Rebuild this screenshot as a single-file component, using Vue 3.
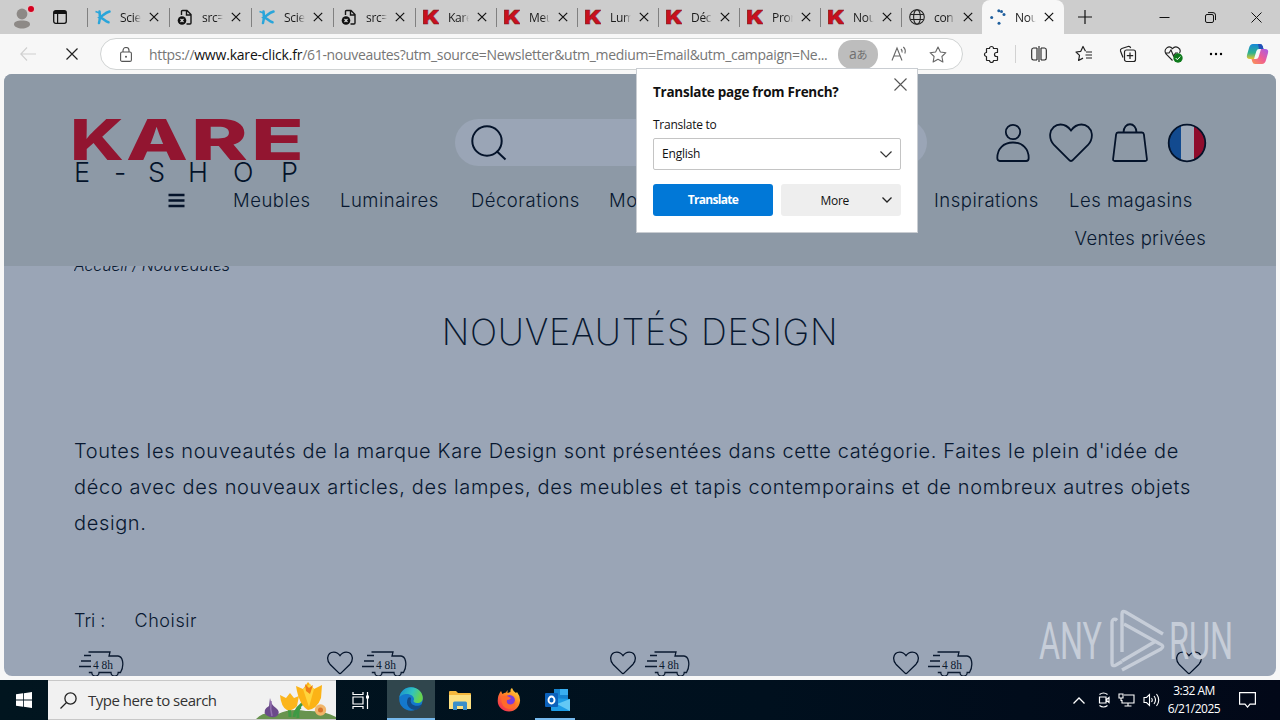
<template>
  <div class="screen">
    <!-- tab strip -->
    <div class="tab-strip">
      <div class="profile">
        <svg width="26" height="26" viewBox="0 0 26 26">
          <circle cx="12" cy="11" r="5.400" fill="#8d8986" />
          <path d="M4 21.500c0-3 3-4 8-4s8 1 8 4c0 2-4 4-8 4s-8-2-8-4z" fill="#8d8986" />
          <circle cx="21" cy="6" r="4" fill="#e3c4c6" />
          <circle cx="21" cy="6" r="3" fill="#d4001f" />
        </svg>
      </div>
      <svg class="workspace" width="14" height="14" viewBox="0 0 14 14">
        <rect x="0.700" y="0.700" width="12.600" height="12.600" rx="2" fill="none" stroke="#111" stroke-width="1.300" />
        <path d="M1 1h12v3H1zM4 3h1.200v10H4z" fill="#111" />
      </svg>
      <div class="tabs">
        <div v-for="(tab, index) in tabs" :key="index" class="tab" :class="{ active: tab.active, narrow: index > 3 }">
          <svg v-if="tab.icon === 'blue'" class="favicon" viewBox="0 0 16 16">
            <path d="M4.500 2.500c.5 4 .5 8-.5 11.500M14.500 2.500c-4 1-6 3.500-9.500 5.800 3 1 5 4 8.500 5" fill="none" stroke="#29a5da" stroke-width="2.500" stroke-linecap="round" />
            <path d="M.5 2.500l4 1.500" stroke="#29a5da" stroke-width="1.500" />
          </svg>
          <svg v-else-if="tab.icon === 'file'" class="favicon" viewBox="0 0 16 16">
            <path d="M4.500 6V2.500q0-1 1-1H10L14 5.500V14q0 1-1 1H9.500M9.500 1.500v4.500H14" fill="none" stroke="#151515" stroke-width="1.400" />
            <circle cx="5" cy="11.500" r="4.300" fill="#111" />
            <path d="M3.500 10l3 3M6.500 10l-3 3" stroke="#ddd" stroke-width="1.100" />
          </svg>
          <svg v-else-if="tab.icon === 'kare'" class="favicon" viewBox="0 0 16 16">
            <text class="kare-k" x="-1" y="15" textLength="18" lengthAdjust="spacingAndGlyphs">K</text>
          </svg>
          <svg v-else-if="tab.icon === 'globe'" class="favicon" viewBox="0 0 16 16">
            <g fill="none" stroke="#222" stroke-width="1.100">
              <circle cx="8" cy="8" r="7.300" />
              <ellipse cx="8" cy="8" rx="3.400" ry="7.300" />
              <path d="M1.500 5.500h13M1.500 10.500h13" />
            </g>
          </svg>
          <svg v-else class="favicon" viewBox="0 0 16 16">
            <g fill="#1f5f9e">
              <circle cx="1.700" cy="8.500" r="1.500" />
              <circle cx="9" cy="14.300" r="1.500" />
              <circle cx="8.800" cy="1.700" r="1.500" />
              <circle cx="11.500" cy="2.600" r="1.500" />
              <circle cx="14" cy="5.500" r="1.500" />
            </g>
          </svg>
          <span class="tab-title">{{ tab.title }}</span>
          <svg class="tab-close" width="10" height="10" viewBox="0 0 10 10"><path d="M.8.800l8.400 8.400M9.200.800L.8 9.200" stroke="#111" stroke-width="1.200" /></svg>
        </div>
      </div>
      <svg class="new-tab" width="14" height="14" viewBox="0 0 14 14"><path d="M7 0v14M0 7h14" stroke="#111" stroke-width="1.200" /></svg>
      <div class="window-buttons">
        <svg width="11" height="11" viewBox="0 0 11 11"><path d="M.5 5.500h10" stroke="#111" /></svg>
        <svg width="11" height="11" viewBox="0 0 11 11">
          <rect x=".5" y="2.500" width="8" height="8" rx="1.500" fill="none" stroke="#111" />
          <path d="M3 .6h5q2.500 0 2.500 2.500v5" fill="none" stroke="#111" />
        </svg>
        <svg width="11" height="11" viewBox="0 0 11 11"><path d="M.5.500l10 10M10.500.500l-10 10" stroke="#111" /></svg>
      </div>
    </div>

    <!-- toolbar -->
    <div class="toolbar">
      <svg class="back" width="16" height="14" viewBox="0 0 16 14"><path d="M7 .5L.8 7 7 13.500M1 7h15" fill="none" stroke="#cfcfcf" stroke-width="1.100" /></svg>
      <svg class="stop" width="12" height="12" viewBox="0 0 12 12"><path d="M.5.500l11 11M11.500.500l-11 11" stroke="#222" stroke-width="1.200" /></svg>
      <div class="address">
        <svg class="lock" width="12" height="15" viewBox="0 0 12 15">
          <path d="M3 5V3.500a3 3 0 0 1 6 0V5" fill="none" stroke="#555" stroke-width="1.100" />
          <rect x=".6" y="5" width="10.800" height="9.400" rx="1.500" fill="none" stroke="#555" stroke-width="1.100" />
          <circle cx="6" cy="9.700" r="1" fill="#555" />
        </svg>
        <div class="url">https://<b>www.kare-click.fr</b>/61-nouveautes?utm_source=Newsletter&amp;utm_medium=Email&amp;utm_campaign=Ne...</div>
        <div class="translate-badge">a<small>あ</small></div>
        <svg class="read-aloud" width="17" height="16" viewBox="0 0 17 16">
          <path d="M1 14.500L6 2l5 12.500M2.700 10h6.600M10 3q1.500 1.500 1 3.500M12.300 1q3 2.800 1.500 6.500" fill="none" stroke="#666" stroke-width="1.100" />
        </svg>
        <svg class="fav-star" width="18" height="17" viewBox="0 0 18 17"><path :d="starPath" fill="none" stroke="#666" stroke-width="1.100" stroke-linejoin="round" /></svg>
      </div>
      <div class="tool-icons">
        <svg width="18" height="18" viewBox="0 0 18 18"><path d="M4 3.500h2.500a2 2 0 1 1 4 0H14q.5 0 .5.500v3.500h-1a2 2 0 0 0 0 4h1V15q0 .5-.5.500h-3.500a2 2 0 0 1-4 0H4q-.5 0-.5-.5v-3.500a2 2 0 1 1 0-4V4q0-.5.500-.5z" fill="none" stroke="#222" stroke-width="1.200" stroke-linejoin="round" /></svg>
        <i class="divider"></i>
        <svg width="18" height="18" viewBox="0 0 18 18"><path d="M7 3H3.500Q1.700 3 1.700 5v8q0 2 1.800 2H7M11 3h3.500q1.800 0 1.800 2v8q0 2-1.800 2H11M9 1v16M7 3v12M11 3v12" fill="none" stroke="#222" stroke-width="1.100" /></svg>
        <svg width="18" height="18" viewBox="0 0 18 18"><path d="M10.500 6.300L8 1.500 5.800 6.300l-4.800.700 3.500 3.400-.9 5.100 4.400-2.400M11 7h6M10.500 10h6.500M11 13h6" fill="none" stroke="#222" stroke-width="1.200" stroke-linejoin="round" /></svg>
        <svg width="18" height="18" viewBox="0 0 18 18">
          <path d="M4 12.500L1.500 6q-.5-1.800 1.300-2.500L9 1.500q2-.5 2.700 1.500" fill="none" stroke="#222" stroke-width="1.200" />
          <rect x="5.500" y="5" width="11" height="11.500" rx="2" fill="none" stroke="#222" stroke-width="1.200" />
          <path d="M11 7.500v6.500M7.800 10.700h6.400" stroke="#222" stroke-width="1.200" />
        </svg>
        <svg width="19" height="18" viewBox="0 0 19 18">
          <path d="M8.500 15.500L2 9C-1 4 5-.5 8.500 3.700 12-.5 18 4 15.500 8M1 8h4l2-3 2.500 6L11.500 8H14" fill="none" stroke="#222" stroke-width="1.100" />
          <circle cx="14" cy="13" r="4.700" fill="#0e7a1c" />
          <path d="M11.700 13l1.600 1.700 3-3.200" fill="none" stroke="#fff" />
        </svg>
        <svg width="14" height="4" viewBox="0 0 14 4"><circle cx="2" cy="2" r="1.200" /><circle cx="7" cy="2" r="1.200" /><circle cx="12" cy="2" r="1.200" /></svg>
        <svg class="copilot" width="23" height="22" viewBox="0 0 23 22">
          <defs>
            <linearGradient id="cop-a" x1="0" y1="0" x2="0" y2="1"><stop offset="0" stop-color="#1687d9" /><stop offset=".6" stop-color="#2fb28c" /><stop offset="1" stop-color="#e7c52e" /></linearGradient>
            <linearGradient id="cop-b" x1="1" y1="0" x2="0" y2="1"><stop offset="0" stop-color="#a45bea" /><stop offset=".5" stop-color="#ee5c94" /><stop offset="1" stop-color="#fb9852" /></linearGradient>
          </defs>
          <path d="M7 1h7q2 0 2.700 2.300L17.500 6H13q-2 0-2.600 2L8 16H4q-4 0-3-4l2-7q1-4 4-4z" fill="url(#cop-a)" />
          <path d="M16 21H9q-2 0-2.700-2.300L5.500 16H10q2 0 2.600-2L15 6h4q4 0 3 4l-2 7q-1 4-4 4z" fill="url(#cop-b)" />
          <path d="M12 1h2q2 0 2.700 2.300L17.500 6H13z" fill="#2450b8" />
        </svg>
      </div>
    </div>

    <!-- page -->
    <div class="page">
      <header class="site-header">
        <div class="header-main">
          <svg class="logo" width="228" height="66" viewBox="0 0 228 66">
            <text v-for="l in logoLetters" :key="l.char" class="logo-big" :x="l.x" y="40.500" :textLength="l.w" lengthAdjust="spacingAndGlyphs">{{ l.char }}</text>
            <text class="logo-small" x="0 40 74 114 159 207" y="63">E-SHOP</text>
          </svg>
          <div class="search-pill">
            <svg width="36" height="36" viewBox="0 0 36 36"><g fill="none" stroke="#04132a" stroke-width="2"><circle cx="16" cy="16" r="14.700" /><path d="M25.500 26l9 8.500" /></g></svg>
          </div>
          <div class="account-icons">
            <svg width="34" height="40" viewBox="0 0 34 40"><g class="line"><circle cx="17" cy="9" r="7.200" /><path d="M1.300 35c0-9 6-15.500 15.700-15.500S32.700 26 32.700 35q0 3-2.500 3H3.800q-2.500 0-2.500-3z" /></g></svg>
            <svg width="44" height="40" viewBox="0 0 44 40"><path class="line" d="M22 38Q21 38 19.500 36.300L5 22C1.500 18 .9 14 1.200 11 2 5 6.500 1.500 11.500 1.500c5 0 8 2.500 10.500 6 2.500-3.500 5.500-6 10.500-6C37.500 1.500 42 5 42.800 11c.3 3-.3 7-3.800 11L24.500 36.300Q23 38 22 38z" /></svg>
            <svg width="36" height="40" viewBox="0 0 36 40"><path class="line" d="M6 9.500h24q1.600 0 1.900 1.800L34.900 36q.2 2-1.700 2H2.800Q.9 38 1.100 36L4.100 11.300Q4.400 9.500 6 9.500zM11.500 9.500C11.500-1.500 24.500-1.500 24.500 9.500" /></svg>
            <svg width="40" height="40" viewBox="0 0 40 40">
              <clipPath id="flag-clip"><circle cx="20" cy="20" r="18.500" /></clipPath>
              <g clip-path="url(#flag-clip)"><path d="M0 0h14v40H0z" fill="#124a8f" /><path d="M14 0h13v40H14z" fill="#9ea9b8" /><path d="M27 0h13v40H27z" fill="#8f0c2c" /></g>
              <circle cx="20" cy="20" r="18.300" fill="none" stroke="#04132a" stroke-width="1.800" />
            </svg>
          </div>
        </div>
        <nav class="site-nav">
          <svg width="17" height="15" viewBox="0 0 17 15"><path d="M.5 2h16M.5 7.500h16M.5 13h16" stroke="#04132a" stroke-width="2.600" /></svg>
          <a v-for="item in navItems" :key="item">{{ item }}</a>
        </nav>
        <div class="site-nav-second"><a>Ventes privées</a></div>
      </header>

      <main class="content">
        <div class="breadcrumb"><span>Accueil / Nouveautés</span></div>
        <h1>NOUVEAUTÉS DESIGN</h1>
        <p class="intro">
          <span>Toutes les nouveautés de la marque Kare Design sont présentées dans cette catégorie. Faites le plein d'idée de</span>
          <span>déco avec des nouveaux articles, des lampes, des meubles et tapis contemporains et de nombreux autres objets</span>
          <span>design.</span>
        </p>
        <div class="sort"><span>Tri :</span><span class="choice">Choisir</span></div>
        <div class="products">
          <div v-for="n in 4" :key="n" class="product">
            <svg width="45" height="25" viewBox="0 0 45 25">
              <g fill="none" stroke="#0b1a30" stroke-width="1.300">
                <path d="M9.500 1H31l-1 4h9q3.500.300 4.500 5 1.200 6-2 11.500h-2.300a3.600 3.600 0 0 1-7.200 0H20a3.600 3.600 0 0 1-7.200 0h-3" />
                <path d="M5 4.500h7M2 10h10M0 15.500h12" />
              </g>
              <text class="hours" x="14" y="17.500" textLength="20" lengthAdjust="spacingAndGlyphs">4 8h</text>
            </svg>
            <svg width="26" height="24" viewBox="0 0 44 40"><path d="M22 38Q21 38 19.500 36.300L5 22C1.500 18 .9 14 1.200 11 2 5 6.500 1.500 11.500 1.500c5 0 8 2.500 10.500 6 2.500-3.500 5.500-6 10.500-6C37.500 1.500 42 5 42.800 11c.3 3-.3 7-3.800 11L24.500 36.300Q23 38 22 38z" fill="none" stroke="#04132a" stroke-width="2.200" /></svg>
          </div>
        </div>
      </main>
    </div>

    <!-- watermark -->
    <svg class="watermark" width="200" height="66" viewBox="0 0 200 66">
      <text x="2" y="52" textLength="63" lengthAdjust="spacingAndGlyphs">ANY</text>
      <text x="132" y="52" textLength="64" lengthAdjust="spacingAndGlyphs">RUN</text>
      <g fill="none" stroke="#c6cdd8" stroke-width="3.400" stroke-linejoin="round">
        <path d="M80 13.500l-1-1q-4-1-4 3V56q0 4 4 2l6-3.500" />
        <path d="M85 45V7q0-4 3.500-2L126 27" />
        <path d="M87 17l36 20q5 2 1 5L85 63" />
        <path d="M85 54l34-20" />
      </g>
    </svg>

    <!-- translate popup -->
    <div class="popup">
      <div class="popup-head">
        <strong>Translate page from French?</strong>
        <svg width="13" height="13" viewBox="0 0 13 13"><path d="M.5.500l12 12M12.500.500l-12 12" stroke="#555" stroke-width="1.100" /></svg>
      </div>
      <label>Translate to</label>
      <div class="select">
        <span>English</span>
        <svg width="12" height="7" viewBox="0 0 12 7"><path d="M.5.500L6 6 11.500.500" fill="none" stroke="#333" stroke-width="1.200" /></svg>
      </div>
      <div class="popup-buttons">
        <button class="primary">Translate</button>
        <button class="more">
          <span>More</span>
          <svg width="10" height="6" viewBox="0 0 10 6"><path d="M.5.500L5 5 9.500.500" fill="none" stroke="#222" stroke-width="1.300" /></svg>
        </button>
      </div>
    </div>

    <!-- taskbar -->
    <div class="taskbar">
      <div class="start">
        <svg width="16" height="16" viewBox="0 0 16 16"><path d="M0 2.300L7 1.300V7.600H0zM7.800 1.200L16 0v7.600H7.800zM0 8.400h7v6.300l-7-1zM7.800 8.400H16V16l-8.200-1.200z" fill="#fff" /></svg>
      </div>
      <div class="task-search">
        <svg width="17" height="17" viewBox="0 0 17 17"><g fill="none" stroke="#222" stroke-width="1.300"><circle cx="10.500" cy="6.500" r="5.600" /><path d="M6.500 10.500L.5 16.500" /></g></svg>
        <span>Type here to search</span>
        <svg class="flowers" width="80" height="38" viewBox="0 0 80 38">
          <path d="M0 38q9-9 22-5 12-6 28-3 18-1 30 6v2z" fill="#68934f" />
          <path d="M34 36q0-8-3-13M38 36q1-10 15-18M42 37q-1-10 3-11" fill="none" stroke="#3d9a45" stroke-width="3" />
          <path d="M14 17q1 7 6 10 5 4 1 8-5 3-11-1-4-5 3-9z" fill="#6b4a8b" />
          <path d="M15 20q-1 8 1 15" stroke="#9372b0" stroke-width="1.500" fill="none" />
          <path d="M24 14l6 3 4-5 4 5 5-2-2 10q-4 5-10 4-6-3-7-15z" fill="#fbb51d" />
          <path d="M40 5l7 3 5-7 6 7 8-4-1 13q-4 11-13 12-9-5-12-24z" fill="#fcb316" />
          <path d="M47 8l6 18 5-18-4-5z" fill="#ffd43c" />
          <path d="M49 3l4 4 4-3-3 9-4-3z" fill="#ee7d16" />
          <circle cx="64.500" cy="29" r="5.700" fill="#f0b56a" /><circle cx="64.500" cy="29" r="2.500" fill="#d9742b" />
        </svg>
      </div>
      <div class="task-app">
        <svg width="18" height="17" viewBox="0 0 18 17"><path d="M1 0v2.500h10V0M1 17v-2.500h10V17M1 5h10v7H1zM15.500 0v17" fill="none" stroke="#fff" stroke-width="1.200" /><path d="M14 3.500h3v3h-3z" fill="#fff" /></svg>
      </div>
      <div class="task-app current">
        <svg width="24" height="24" viewBox="0 0 24 24">
          <defs>
            <linearGradient id="edge-g" x1="0" y1="0" x2="1" y2=".3"><stop offset="0" stop-color="#168bd2" /><stop offset=".6" stop-color="#31c3bd" /><stop offset="1" stop-color="#68d34d" /></linearGradient>
          </defs>
          <circle cx="12" cy="12" r="11.800" fill="#1478cc" />
          <path d="M.3 10.500C1.500 4 6.500.200 12 .200c7 0 12 5.500 11.800 11 0 4-4 5.500-7.300 4.500-2-.6-2.500-1.500-1.500-3C15.500 9 11 6.500 6.500 7 3 7.500 1 9 .3 10.500z" fill="url(#edge-g)" />
          <path d="M9 11c-3 6 1 12 8 12 3-1 5.500-4 6-6-5 4-13 1-11-5 .5-2-2-2.500-3-1z" fill="#134b86" />
        </svg>
      </div>
      <div class="task-app">
        <svg width="22" height="19" viewBox="0 0 22 19"><path d="M0 1q0-1 1-1h6l2 2h12q1 0 1 1v15H0z" fill="#f5b73c" /><path d="M0 4h22v14H0z" fill="#fde081" /><path d="M4 19v-7q0-1.500 1.500-1.500h11Q18 10.500 18 12v7h-4v-4H8v4z" fill="#3c8fc9" /></svg>
      </div>
      <div class="task-app">
        <svg width="24" height="24" viewBox="0 0 24 24">
          <defs>
            <linearGradient id="fox-g" x1="1" y1="0" x2=".2" y2="1"><stop offset="0" stop-color="#ffe94a" /><stop offset=".45" stop-color="#ff8a22" /><stop offset="1" stop-color="#f22b55" /></linearGradient>
          </defs>
          <path d="M4 3l1.500 3Q7 4.500 9 4.500L10.500 2v3l3-1Q13 1 15 0q1 3 4 5l1-1q3.500 4.500 3 9c-.5 6-5 10.500-11 10.500S.7 19 .7 13Q.7 7 4 3z" fill="url(#fox-g)" />
          <circle cx="12.500" cy="12.500" r="5.500" fill="#7a3cdc" />
          <path d="M4 9q4-3 8 0l2 1q-1 2-4 2-1 4 3 4.500 4 0 5-4 2 8-6 8.500Q4 20 4 9z" fill="#ff6a2c" />
        </svg>
      </div>
      <div class="task-app outlook">
        <svg width="25" height="22" viewBox="0 0 25 22">
          <path d="M9 0h14v10H9z" fill="#1583d0" /><path d="M15 0h8v6h-8z" fill="#39aef0" />
          <path d="M6 9l19 1v12H7q-1 0-1-1z" fill="#1e9ce6" /><path d="M25 10v12L12 15z" fill="#63c8f5" />
          <rect y="4" width="13" height="14" rx="1" fill="#0b61bb" />
          <ellipse cx="6.500" cy="11" rx="3" ry="3.500" fill="none" stroke="#fff" stroke-width="1.900" />
        </svg>
      </div>
      <div class="tray">
        <svg width="12" height="7" viewBox="0 0 12 7"><path d="M.5 6.500L6 1l5.500 5.500" fill="none" stroke="#fff" stroke-width="1.300" /></svg>
        <svg width="13" height="16" viewBox="0 0 13 16"><path d="M2.500 2.500q4-3 8 0M2.500 13.500q4 3 8 0M2.500 5H9v6H2.500zM9 8l3-2.500v5z" fill="none" stroke="#fff" stroke-width="1.200" /></svg>
        <svg width="17" height="14" viewBox="0 0 17 14"><path d="M6 2h10v8H4V7M10 10v3M6.500 13h7M1 1h4v4H1zM3 5v3" fill="none" stroke="#fff" stroke-width="1.100" /></svg>
        <svg width="17" height="14" viewBox="0 0 17 14"><path d="M1 4.500h2.500L6.500 1.500v11L3.500 9.500H1zM8.500 5q1.500 2 0 4M11 3q3 4 0 8M13.500 1q4.500 6 0 12" fill="none" stroke="#fff" stroke-width="1.100" /></svg>
        <div class="clock"><span>3:32 AM</span><span>6/21/2025</span></div>
        <svg class="notify" width="17" height="16" viewBox="0 0 17 16"><path d="M.6.600h15.800v11.500H11l-2.500 3-2.500-3H.6z" fill="none" stroke="#fff" stroke-width="1.200" /></svg>
      </div>
    </div>
  </div>
</template>

<script setup>
const tabs = [
  { icon: 'blue', title: 'Scie' },
  { icon: 'file', title: 'src=' },
  { icon: 'blue', title: 'Scie' },
  { icon: 'file', title: 'src=' },
  { icon: 'kare', title: 'Kare' },
  { icon: 'kare', title: 'Meu' },
  { icon: 'kare', title: 'Lum' },
  { icon: 'kare', title: 'Déc' },
  { icon: 'kare', title: 'Pror' },
  { icon: 'kare', title: 'Nou' },
  { icon: 'globe', title: 'con' },
  { icon: 'loading', title: 'Nou', active: true },
];

const navItems = ['Meubles', 'Luminaires', 'Décorations', 'Mo', 'Inspirations', 'Les magasins'];

// each letter is stretched on its own to get the wide logotype
const logoLetters = [
  { char: 'K', x: -4, w: 54 },
  { char: 'A', x: 52, w: 62 },
  { char: 'R', x: 117, w: 57 },
  { char: 'E', x: 177, w: 53 },
];

const starPath = 'M9 1l2.400 5 5.500.700-4 3.800 1 5.500L9 13.300 4.100 16l1-5.500-4-3.800L6.600 6z';
</script>

<style>
body {
  margin: 0;
  overflow: hidden;
}
</style>

<style scoped>
.screen {
  position: relative;
  width: 1280px;
  height: 720px;
  display: flex;
  flex-direction: column;
  overflow: hidden;
  background: #f7f7f7;
  font-family: "Open Sans", "Noto Sans", "Noto Sans CJK JP", sans-serif;
}

.screen svg {
  display: block;
  flex-shrink: 0;
}

/* tab strip */
.tab-strip {
  height: 34px;
  display: flex;
  align-items: center;
  background: #cdcdcd;
}

.profile {
  width: 43px;
  padding-left: 10px;
}

.profile svg {
  margin-bottom: 3px;
}

.workspace {
  margin-right: 20px;
}

.tabs {
  display: flex;
  height: 34px;
}

.tab {
  box-sizing: border-box;
  width: 82px;
  height: 34px;
  display: flex;
  align-items: center;
  padding-left: 8px;
  background: linear-gradient(#808080, #808080) no-repeat 0 8px / 1px 19px;
}

.tab.narrow {
  width: 81px;
}

.tab.active {
  width: 82px;
  background: #f7f7f7;
  border-radius: 8px 8px 0 0;
}

.favicon {
  width: 16px;
  height: 16px;
}

.kare-k {
  font: 900 19px Inter, sans-serif;
  fill: #c8101e;
  stroke: #6d1a24;
  stroke-width: 0.4px;
}

.tab-title {
  width: 21px;
  margin-left: 9px;
  overflow: hidden;
  white-space: nowrap;
  font-size: 12px;
  letter-spacing: -0.3px;
  color: #1b1b1b;
  mask-image: linear-gradient(90deg, #000 65%, transparent);
}

.tab-close {
  margin-left: 8px;
}

.new-tab {
  margin-left: 14px;
}

.window-buttons {
  margin-left: auto;
  display: flex;
  gap: 35px;
  padding-right: 18px;
}

/* toolbar */
.toolbar {
  height: 40px;
  display: flex;
  align-items: center;
}

.back {
  margin-left: 20px;
}

.stop {
  margin: 0 22px 0 30px;
}

.address {
  box-sizing: border-box;
  width: 863px;
  height: 32px;
  display: flex;
  align-items: center;
  padding: 0 15px 0 19px;
  background: #fff;
  border: 1px solid #d0d3d3;
  border-radius: 16px;
}

.url {
  width: 681px;
  margin-left: 17px;
  font-size: 14px;
  white-space: nowrap;
  letter-spacing: -0.32px;
  color: #767676;
}

.url b {
  font-weight: 400;
  letter-spacing: -0.2px;
  color: #111;
}

.translate-badge {
  width: 40px;
  margin-left: 8px;
  border-radius: 14px;
  background: #bdbdbd;
  color: #707070;
  font-size: 14px;
  line-height: 28px;
  text-align: center;
  letter-spacing: -0.5px;
}

.translate-badge small {
  font-size: 11px;
}

.read-aloud {
  margin-left: 13px;
}

.fav-star {
  margin-left: 21px;
}

.tool-icons {
  flex: 1;
  display: flex;
  align-items: center;
  padding-left: 20px;
}

.divider {
  width: 1px;
  height: 18px;
  margin: 0 14px 0 14px;
  background: #d2d2d2;
}

.tool-icons svg + svg {
  margin-left: 26.5px;
}

.tool-icons svg.copilot {
  margin-left: 23px;
}

/* page */
.page {
  width: 1272px;
  height: 602px;
  margin: 0 4px 4px;
  overflow: hidden;
  border-radius: 8px;
  background: #9aa5b6;
  color: #081830;
  font-family: Inter, sans-serif;
  font-weight: 300;
}

.site-header {
  height: 192px;
  background: #8d99a6;
}

.header-main {
  height: 111px;
  display: flex;
  align-items: flex-start;
  padding: 45px 69px 0 70px;
  box-sizing: border-box;
}

.logo-big {
  font: 800 56px Inter, sans-serif;
  fill: #921530;
}

.logo-small {
  font: 300 27px Inter, sans-serif;
  fill: #04132a;
}

.search-pill {
  box-sizing: border-box;
  width: 472px;
  height: 47px;
  margin-left: 153px;
  padding: 6px 16px;
  border-radius: 24px;
  background: #9aa5b6;
}

.account-icons {
  display: flex;
  gap: 19px;
  margin: 4px 0 0 auto;
}

.line {
  fill: none;
  stroke: #04132a;
  stroke-width: 1.800;
}

.site-nav {
  display: grid;
  grid-template-columns: 65px 107px 131px 138px 325px 135px auto;
  align-items: center;
  height: 30px;
  padding-left: 164px;
  font-size: 18.500px;
  letter-spacing: 0.5px;
  white-space: nowrap;
}

.site-nav-second {
  display: flex;
  justify-content: flex-end;
  height: 46px;
  padding-right: 70px;
  font-size: 18.500px;
  line-height: 46px;
  letter-spacing: 0.3px;
}

.content {
  padding: 0 70px;
}

.breadcrumb {
  height: 6px;
  overflow: hidden;
  font-size: 16px;
  line-height: 20px;
  letter-spacing: -0.15px;
  font-style: italic;
}

.breadcrumb span {
  display: block;
  margin-top: -11px;
}

h1 {
  margin: 36px 0 0;
  text-align: center;
  font-size: 36px;
  font-weight: 200;
  line-height: 48px;
  letter-spacing: 0.75px;
}

.intro {
  margin: 77px 0 0;
  font-size: 20px;
  line-height: 36px;
  letter-spacing: 0.640px;
  white-space: nowrap;
}

.intro span {
  display: block;
}

.sort {
  display: flex;
  gap: 29px;
  margin-top: 65px;
  font-size: 18px;
  line-height: 30px;
}

.choice {
  letter-spacing: 0.6px;
}

.products {
  display: grid;
  grid-template-columns: repeat(4, 283px);
  margin-top: 15px;
}

.product {
  display: flex;
  justify-content: space-between;
  padding: 0 4px 0 5px;
}

.hours {
  font: 12.500px "Liberation Serif", serif;
  fill: #0b1a30;
}

.watermark {
  position: absolute;
  left: 1037px;
  top: 607px;
}

.watermark text {
  font: 400 51px Roboto, sans-serif;
  fill: #c6cdd8;
}

/* translate popup */
.popup {
  position: absolute;
  left: 636px;
  top: 68px;
  box-sizing: border-box;
  width: 282px;
  height: 165px;
  padding: 9px 16px 0;
  background: #fff;
  border: 1px solid #c9cdd2;
  font-size: 12px;
  color: #111;
}

.popup-head {
  display: flex;
  justify-content: space-between;
  height: 40px;
  margin-right: -6px;
}

.popup-head strong {
  margin-top: 4px;
  font-size: 13.500px;
  line-height: 20px;
  letter-spacing: -0.25px;
}

.popup label {
  display: block;
  font-weight: 500;
  line-height: 14px;
  letter-spacing: -0.25px;
}

.select {
  box-sizing: border-box;
  height: 32px;
  margin-top: 6px;
  display: flex;
  align-items: center;
  justify-content: space-between;
  padding: 0 8px;
  border: 1px solid #c4c4c4;
  border-radius: 2px;
  line-height: 16px;
  letter-spacing: -0.2px;
}

.select span {
  margin-top: -1px;
}

.popup-buttons {
  display: flex;
  gap: 8px;
  margin-top: 14px;
}

.popup-buttons button {
  width: 120px;
  height: 32px;
  padding-bottom: 3px;
  border: none;
  border-radius: 3px;
  font: 12px "Open Sans", sans-serif;
}

.popup-buttons .primary {
  background: #0178d7;
  color: #fff;
  font-weight: 700;
  letter-spacing: -0.7px;
}

.popup-buttons .more {
  display: flex;
  align-items: center;
  justify-content: flex-end;
  gap: 33px;
  padding: 0 9px;
  background: #eee;
  color: #111;
  letter-spacing: -0.3px;
}

/* taskbar */
.taskbar {
  height: 40px;
  flex-shrink: 0;
  display: flex;
  background: linear-gradient(90deg, #01151f, #00101e 60%, #020818);
}

.start {
  width: 48px;
  display: flex;
  align-items: center;
  justify-content: center;
}

.task-search {
  box-sizing: border-box;
  width: 288px;
  display: flex;
  align-items: center;
  padding-left: 12px;
  background: #f1f1f1;
  border: solid #c8c8c8;
  border-width: 1px 0;
}

.task-search span {
  margin-left: 11px;
  font-size: 15px;
  letter-spacing: -0.5px;
  color: #333;
  white-space: nowrap;
}

.flowers {
  margin-left: auto;
}

.task-app {
  width: 49px;
  display: flex;
  align-items: center;
  justify-content: center;
}

.task-app.current {
  box-sizing: border-box;
  width: 48px;
  margin-left: 2px;
  background: #30464d;
  border-bottom: 2px solid #76b9ed;
}

.outlook {
  background: linear-gradient(#76b9ed, #76b9ed) no-repeat 2px 38px / 40px 2px;
}

.tray {
  margin-left: auto;
  display: flex;
  align-items: center;
  gap: 8px;
  padding-right: 24px;
}

.tray svg:first-child {
  margin-right: 4px;
}

.clock {
  width: 58px;
  margin-left: -3px;
  display: flex;
  flex-direction: column;
  text-align: center;
  font-size: 12px;
  line-height: 18px;
  letter-spacing: -0.5px;
  color: #fff;
}

.notify {
  margin-left: 8px;
}
</style>
